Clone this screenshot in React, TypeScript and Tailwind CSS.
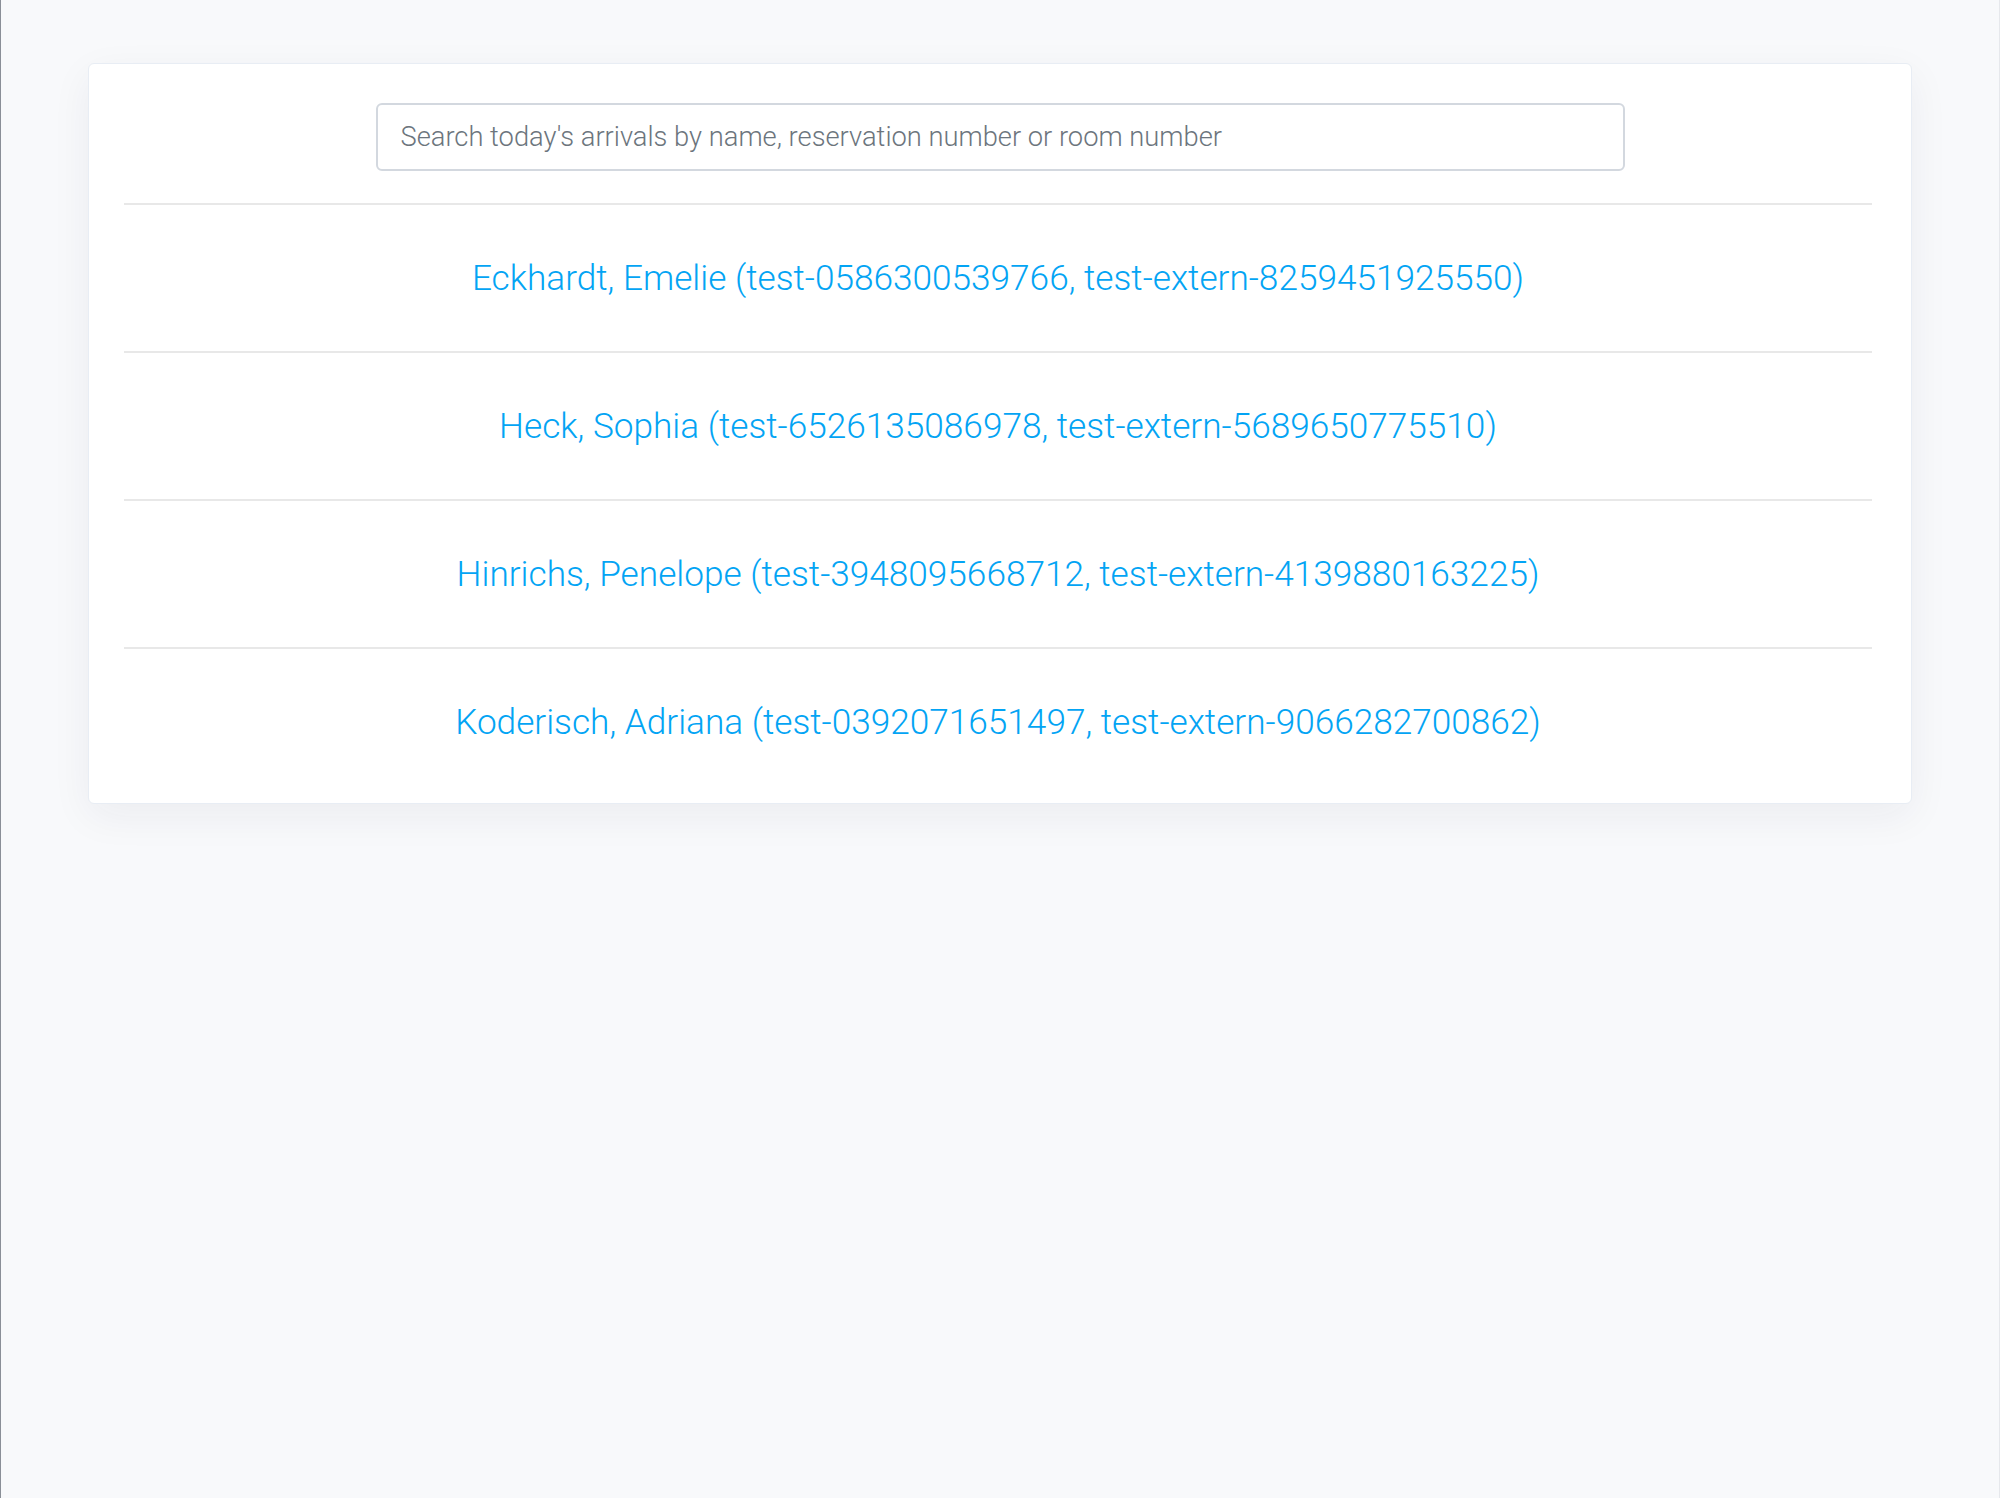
const arrivals = [
  "Eckhardt, Emelie (test-0586300539766, test-extern-8259451925550)",
  "Heck, Sophia (test-6526135086978, test-extern-5689650775510)",
  "Hinrichs, Penelope (test-3948095668712, test-extern-4139880163225)",
  "Koderisch, Adriana (test-0392071651497, test-extern-9066282700862)",
]

export default function App() {
  return (
    <div className="min-h-screen w-full bg-[#f8f9fb] border-l border-l-[#8a8f97] border-r border-r-[#e6e8ec] px-[87px] pt-[63px] font-['Roboto',sans-serif]">
      <div className="rounded-md border border-[#e8edf4] bg-white pl-[35px] pr-[39px] pt-[39px] pb-[8px] shadow-[0_12px_40px_rgba(30,40,70,0.06)]">
        <div className="flex justify-center pl-[4px] mb-[32px]">
          <input
            type="text"
            placeholder="Search today's arrivals by name, reservation number or room number"
            className="h-[68px] w-[1249px] rounded-md border-2 border-[#d3d8df] bg-white px-[23px] text-[27.3px] font-light text-[#495057] placeholder:text-[#6c757d] outline-none"
          />
        </div>
        {arrivals.map((a) => (
          <div
            key={a}
            className="flex h-[148px] items-center justify-center border-t-2 border-[#e8e8e8]"
          >
            <a href="#" className="text-[35.2px] font-light text-[#03a4f4]">
              {a}
            </a>
          </div>
        ))}
      </div>
    </div>
  )
}
